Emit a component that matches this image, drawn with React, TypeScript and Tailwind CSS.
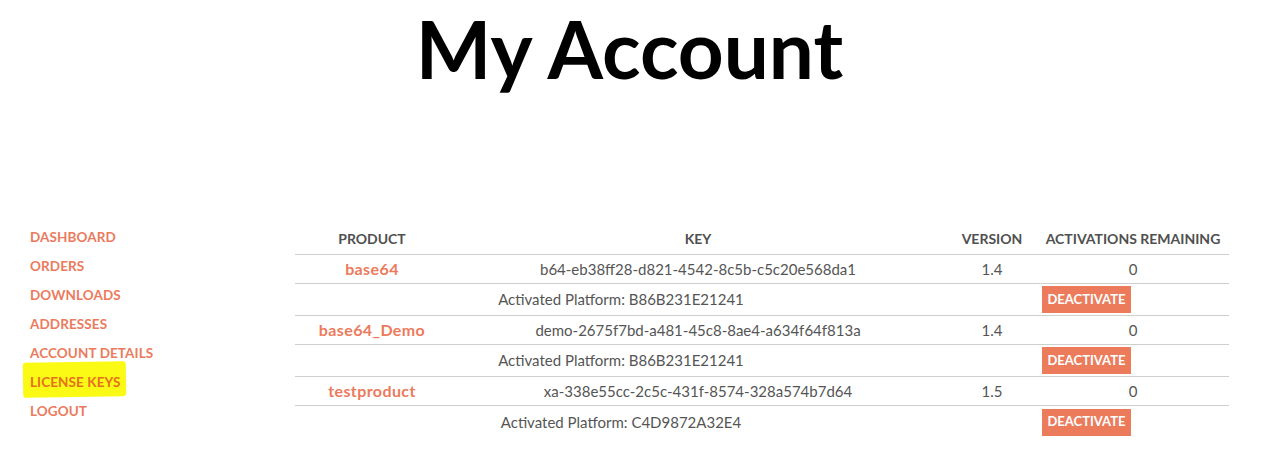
import React from "react";

const nav = ["DASHBOARD", "ORDERS", "DOWNLOADS", "ADDRESSES", "ACCOUNT DETAILS", "LICENSE KEYS", "LOGOUT"];

const rows = [
  { product: "base64", key: "b64-eb38ff28-d821-4542-8c5b-c5c20e568da1", version: "1.4", remaining: "0", platform: "B86B231E21241" },
  { product: "base64_Demo", key: "demo-2675f7bd-a481-45c8-8ae4-a634f64f813a", version: "1.4", remaining: "0", platform: "B86B231E21241" },
  { product: "testproduct", key: "xa-338e55cc-2c5c-431f-8574-328a574b7d64", version: "1.5", remaining: "0", platform: "C4D9872A32E4" },
];

export default function App() {
  return (
    <div className="w-[1263px] h-[467px] bg-white overflow-hidden font-['Lato',sans-serif]">
      <h1 className="text-center font-['Lato',sans-serif] font-bold text-[80px] leading-[96px] text-black pr-[4px]">
        My Account
      </h1>
      <div className="flex pl-[30px] mt-[130px]">
        <nav className="w-[265px] flex flex-col -mt-[4px]">
          {nav.map((n) => (
            <div key={n} className="h-[29px] flex items-center">
              {n === "LICENSE KEYS" ? (
                <span className="relative leading-[16px]">
                  <span className="absolute left-[-7px] right-[-5px] top-[-11px] bottom-[-7px] bg-[#fafa14] rounded-[3px] -rotate-1" />
                  <span className="relative text-[13.5px] font-bold text-[#e7701f] tracking-[0.1px]">{n}</span>
                </span>
              ) : (
                <span className="text-[13.5px] font-bold text-[#ec7a5c] tracking-[0.1px] leading-[16px]">{n}</span>
              )}
            </div>
          ))}
        </nav>
        <div className="w-[934px] text-[15px] text-[#555]">
          <div className="grid grid-cols-[154px_498px_90px_192px] h-[29px] items-center pb-[4px] border-b border-[#cfcfcf] text-[14px] font-bold text-[#505050] text-center">
            <div>PRODUCT</div>
            <div>KEY</div>
            <div>VERSION</div>
            <div>ACTIVATIONS REMAINING</div>
          </div>
          {rows.map((r, i) => (
            <React.Fragment key={r.product}>
              <div className="grid grid-cols-[154px_498px_90px_192px] h-[29px] items-center border-b border-[#cfcfcf] text-center">
                <div className="font-bold text-[#ec7a5c] text-[16px] tracking-[0.4px]">{r.product}</div>
                <div>{r.key}</div>
                <div>{r.version}</div>
                <div>{r.remaining}</div>
              </div>
              <div
                className={`grid grid-cols-[652px_90px_192px] h-[32px] items-center ${i < rows.length - 1 ? "border-b border-[#cfcfcf]" : ""}`}
              >
                <div className="text-center">Activated Platform: {r.platform}</div>
                <div />
                <div className="pl-[5px]">
                  <button className="h-[27px] w-[89px] bg-[#ec7b5c] text-white text-[13px] font-bold flex items-center justify-center">
                    DEACTIVATE
                  </button>
                </div>
              </div>
            </React.Fragment>
          ))}
        </div>
      </div>
    </div>
  );
}
